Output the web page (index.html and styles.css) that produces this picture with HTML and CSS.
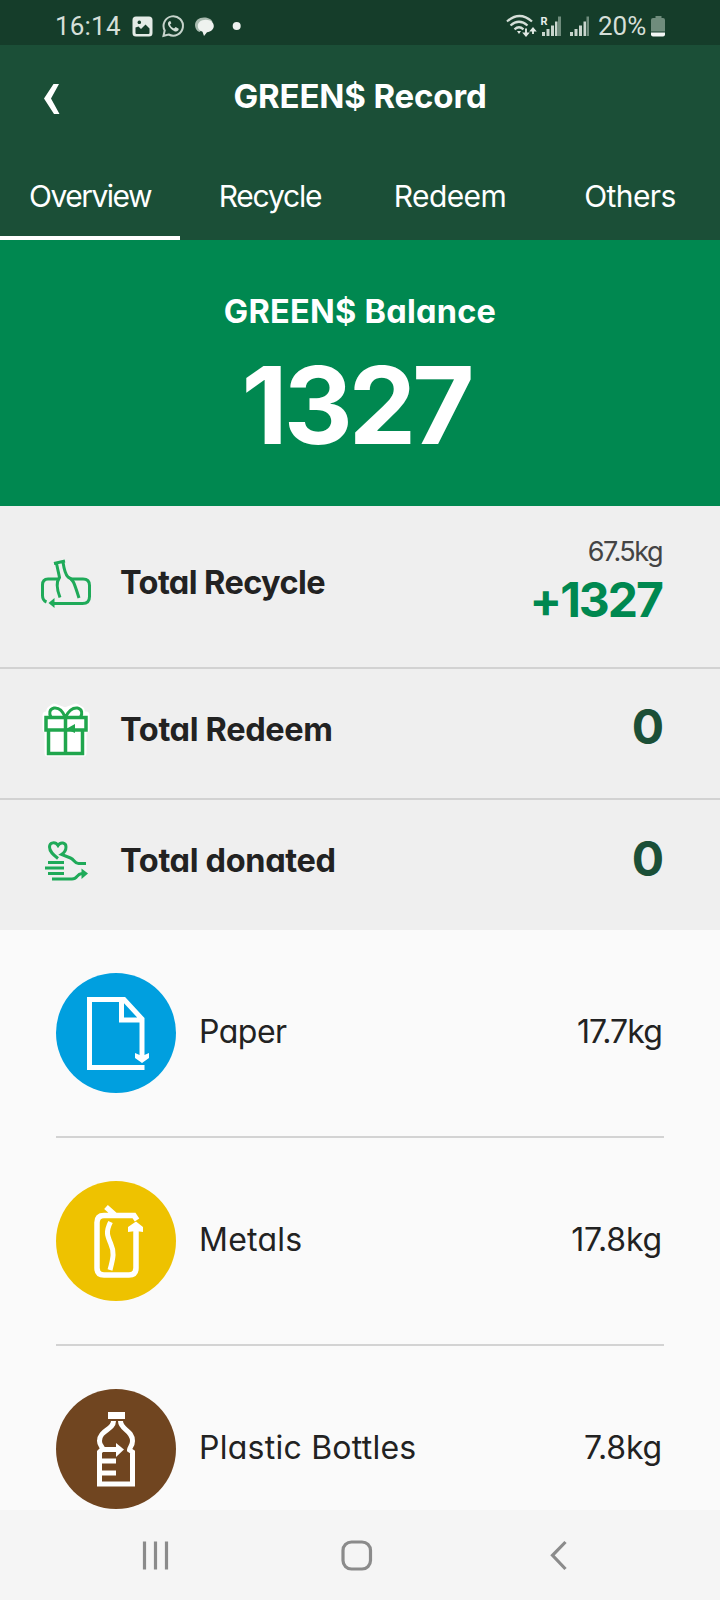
FILE: index.html
```html
<!DOCTYPE html>
<html lang="en">
<head>
<meta charset="utf-8">
<title>GREEN$ Record</title>
<link rel="stylesheet" href="styles.css">
</head>
<body>
<div class="status">
  <span class="clock">16:14</span>
  <svg class="status-left" width="116" height="26" viewBox="130 13 116 26">
    <path fill="#e4ebe6" fill-rule="evenodd" d="M136 16.5h13q3.500 0 3.500 3.500v13q0 3.500-3.500 3.500h-13q-3.500 0-3.500-3.500V20q0-3.500 3.500-3.500zM135.500 27.500v5.500q0 1 1 1h12q1 0 1-1v-4.500l-4-4-4.500 4.500-2.500-2.500zM139.300 20.500a1.800 1.800 0 1 0 .01 0z"/>
    <path d="M163.500 35.800l1.200-5.300a9.700 9.700 0 1 1 4 4z" fill="none" stroke="#c6d3cb" stroke-width="2"/>
    <path d="M169.300 21.300c-2.600 1.500-1 5 1.800 7.600s6 3.600 7.400 1.200l.2-1.400-3-1.700-1.700 1.600c-2-.7-3.400-2.200-4-4l1.400-1.400-1.100-2.300z" fill="#d2ddd6"/>
    <path d="M195 25c0-4.500 3.800-7.500 9-7.500 4 0 7.500 1.500 8.500 4.500l-13 10c-3-1-4.500-4-4.500-7z" fill="#a9bbb0"/>
    <path d="M205.800 19.800c4.800 0 8 2.800 8 6.300 0 3.400-3 5.700-6.800 6.200l-3 3.700-1.500-4.200c-3-.9-4.700-3-4.700-5.700 0-3.500 3.200-6.300 8-6.300z" fill="#eef2ef"/>
    <circle cx="236.700" cy="26" r="4" fill="#eef2ef"/>
  </svg>
  <svg class="status-right" width="90" height="26" viewBox="505 13 90 26">
    <g fill="none" stroke="#d5dfd8" stroke-width="2.300">
      <path d="M507 21.500q12.500-11 25 0M510.500 25.500q8.500-7.500 17 0M514.500 29.300q4.500-4 9 0"/>
      <path d="M526 28.500v5M533 34v-4.500" stroke-width="2"/>
    </g>
    <path d="M517 31h4l-2 3zM522.200 32.500h7.600l-3.800 4.500zM529.200 31.500h7.600l-3.800-4.500z" fill="#e2e9e4"/>
    <g fill="#c9d5cd"><path d="M542 32h3v4h-3zM546.500 29h3v7h-3zM551 25.500h3v10.500h-3zM555 21.500h2.500v14.500H555zM570 32h3v4h-3zM574.500 29h3v7h-3zM579 25.500h3v10.500h-3zM583.500 21.500h2.500v14.500h-2.500z"/></g>
    <path d="M558 16.500h3v19.500h-3zM586.500 16.500h2.500v19.500h-2.500z" fill="#6f8c7c"/>
    <text x="540.500" y="25" class="roam">R</text>
  </svg>
  <span class="percent">20%</span>
  <svg width="16" height="22" viewBox="650 15 16 22"><path d="M655.500 16h6v2h1.500q2 0 2 2v11.500h-14V20q0-2 2-2h2.500z" fill="#6f8c7c"/><path d="M651 32.500h14v2q0 2-2 2h-10q-2 0-2-2z" fill="#f4f7f5"/></svg>
</div>
<header class="header">
  <div class="titlebar">
    <svg class="back" width="18" height="34" viewBox="44 81 18 34"><path d="M54.500 83h5.500l-8 14.500 8.500 15.500h-5.500L45 97.500z" fill="#fff"/></svg>
    <h1 class="title">GREEN$ Record</h1>
  </div>
  <nav class="tabs">
    <span class="tab active">Overview</span>
    <span class="tab tab-tight">Recycle</span>
    <span class="tab">Redeem</span>
    <span class="tab">Others</span>
  </nav>
</header>
<section class="hero">
  <div class="hero-label">GREEN$ Balance</div>
  <div class="hero-value">1327</div>
</section>
<section class="totals">
  <div class="total total-recycle">
    <svg class="total-icon" width="54" height="54" viewBox="38 555.500 54 54" fill="none" stroke="#1faa59" stroke-width="3">
      <path d="M54 564l11-2.500M56.500 564l3 14c-3 4-3.500 10 .5 20M63 562.500c1 7 2 12 5 15 5 2 6 5 11 21"/>
      <path d="M58 579.500H48q-5.500 0-5.500 6V596q0 5 4 6.500M70 579.500h13q6.500 0 6.500 6.500v11q0 7-7 7H52"/>
      <path d="M48.500 603.500l6-5v10z" fill="#1faa59" stroke="none"/>
    </svg>
    <span class="total-name name-recycle">Total Recycle</span>
    <div class="total-values">
      <span class="weight">67.5kg</span>
      <span class="points gain">+1327</span>
    </div>
  </div>
  <div class="total">
    <svg class="total-icon" width="54" height="60" viewBox="38 700 54 60" fill="none" stroke="#20a64d" stroke-width="3.500">
      <path d="M46 716h3l1-5 4-3 11 4 11-4 5 3 1 5h4v14h-3v24H48v-24h-2z" fill="#fff" stroke="#fff" stroke-width="7" stroke-linejoin="round"/>
      <path d="M46 718.500h40V731H46zM48.500 731v23.500h34V731M65.500 718v36.500"/>
      <path d="M65 718c-3-8-7-9.500-11-9-5 1-5 6-3 9M65.500 718c4-8 8-9.500 12-9 5 1 5 6 3 9" stroke-width="3"/>
      <path d="M66 730l9-5v9z" fill="#20a64d" stroke="none"/>
    </svg>
    <span class="total-name">Total Redeem</span>
    <span class="points points-redeem">0</span>
  </div>
  <div class="total total-donated">
    <svg class="total-icon" width="54" height="54" viewBox="38 833 54 54" fill="none" stroke="#1faa59" stroke-width="3">
      <path d="M58 859.500c-5-4-8.500-7-8.500-11.500 0-5 6-5.500 8.500-1.500 2.500-4 8-3 8 1.500 0 3-1.500 5.500-4.500 7.500l9 3.500c4 1.500 4 5.500 8 5.500h7.500"/>
      <path d="M48 863.500h16M45 869h19M48 874.500h16M52 880h20c6 0 4-5 10-5.500"/>
      <path d="M81.500 869.500l6.500 5-6.500 5.500z" fill="#1faa59" stroke="none"/>
    </svg>
    <span class="total-name">Total donated</span>
    <span class="points">0</span>
  </div>
</section>
<main class="materials">
  <div class="material">
    <svg class="badge paper" width="120" height="120" viewBox="0 0 120 120" fill="none" stroke="#fff" stroke-width="5">
      <path d="M88.500 94.500h-55v-68H68L86 46v39M65.500 26.500V47H86"/>
      <path d="M79 80l7 3 7-3v5l-7 5-7-5z" fill="#fff" stroke="none"/>
    </svg>
    <span class="material-name name-tight">Paper</span>
    <span class="material-weight weight-tight">17.7kg</span>
  </div>
  <div class="material">
    <svg class="badge metals" width="120" height="120" viewBox="0 0 120 120" fill="none" stroke="#fff" stroke-width="5.500">
      <path d="M50 26l9 8M81 39l-3-4.500H48q-7 0-7 7V87q0 7 7 7h25q7 0 7-7V47"/>
      <path d="M54.500 41c-5 10-3 14 0 21 4 9 3 14-.5 27" stroke-width="5"/>
      <path d="M72 51v-5l8-5.500 7 5.500v5l-7-1z" fill="#fff" stroke="none"/>
    </svg>
    <span class="material-name">Metals</span>
    <span class="material-weight">17.8kg</span>
  </div>
  <div class="material">
    <svg class="badge plastic" width="120" height="120" viewBox="0 0 120 120" fill="none" stroke="#fff" stroke-width="5">
      <path d="M52 26.500h17" stroke-width="7"/>
      <path d="M57.500 32c0 9-14 9-14 20 0 5 3 5 3 8l-3 3v32h33V63l-3-2c0-3 3-4 3-9 0-11-12-11-12-20M45 60.500h18M44 72h16M44 84h16"/>
      <path d="M60 54l8 6.500-8 7.500z" fill="#fff" stroke="none"/>
    </svg>
    <span class="material-name">Plastic Bottles</span>
    <span class="material-weight">7.8kg</span>
  </div>
</main>
<footer class="navbar">
  <svg width="720" height="90" viewBox="0 0 720 90" fill="none" stroke="#8b8b8b" stroke-width="3.200">
    <path d="M144.500 31.500v28M155.500 31.500v28M166.500 31.500v28"/>
    <rect x="343" y="32" width="27.500" height="27" rx="8.500"/>
    <path d="M565.500 32L552.500 45.300l13 13.700"/>
  </svg>
</footer>
</body>
</html>
```
FILE: styles.css
```css
* { box-sizing: border-box; }
body {
  margin: 0;
  width: 720px;
  height: 1600px;
  overflow: hidden;
  display: flex;
  flex-direction: column;
  background: #fafafa;
  color: #222;
  font-family: Inter, "Liberation Sans", sans-serif;
  font-feature-settings: "cv11";
  white-space: nowrap;
}
svg { display: block; flex: none; }
.status {
  height: 45px;
  flex: none;
  display: flex;
  align-items: center;
  padding: 7px 54px 0 55px;
  background: #153d2a;
  color: #d5dfd8;
  font: 26px/38px Roboto, sans-serif;
}
.clock { width: 75px; letter-spacing: 0.2px; }
.status-right { margin-left: auto; }
.percent { width: 55px; padding-left: 3px; letter-spacing: 0; }
.roam { font: bold 11px Roboto, sans-serif; fill: #e8eeea; }
.header {
  height: 195px;
  flex: none;
  background: #1b4f37;
  color: #fff;
}
.titlebar {
  height: 105px;
  display: grid;
  grid-template-columns: 100px 1fr 100px;
  align-items: center;
}
.back { margin: 2px 0 0 43px; }
.title {
  margin: 0 0 4px;
  text-align: center;
  font-size: 33px;
  line-height: 40px;
  font-weight: 700;
  letter-spacing: -0.15px;
}
.tabs { display: grid; grid-template-columns: repeat(4, 1fr); height: 90px; }
.tab {
  padding-top: 26px;
  text-align: center;
  font-size: 30px;
  line-height: 40px;
  letter-spacing: -0.6px;
}
.active { border-bottom: 4px solid #fff; letter-spacing: -1.5px; }
.tab-tight { letter-spacing: -1.2px; }
.hero {
  height: 266px;
  flex: none;
  padding-top: 52px;
  background: #008850;
  color: #fff;
  text-align: center;
  font-weight: 700;
}
.hero-label { font-size: 32.500px; line-height: 40px; letter-spacing: 0.25px; }
.hero-value { margin-top: 13px; padding-right: 8px; font-size: 107px; line-height: 120px; letter-spacing: -4px; }
.totals { height: 424px; flex: none; background: #efefef; }
.total {
  height: 131px;
  display: flex;
  align-items: center;
  padding: 0 58px 10px 38px;
  border-bottom: 2px solid #d2d2d2;
}
.total-recycle { height: 163px; }
.total-donated { height: 130px; border: 0; padding-bottom: 12px; }
.total-name { margin: 2px 0 0 28px; font-size: 32.500px; font-weight: 700; letter-spacing: -0.35px; }
.name-recycle { letter-spacing: -0.6px; }
.total-values { display: flex; flex-direction: column; align-items: flex-end; margin: 0 0 7px auto; }
.weight { font-size: 27px; line-height: 44px; letter-spacing: -1.5px; color: #444; }
.points { margin-left: auto; font-size: 48px; line-height: 52px; font-weight: 700; color: #1b4f37; letter-spacing: -2px; }
.points-redeem { padding-bottom: 3px; }
.gain { color: #008850; }
.materials { height: 580px; flex: none; padding: 0 56px; }
.material {
  height: 208px;
  display: flex;
  align-items: center;
  border-bottom: 2px solid #d3d3d3;
}
.material:last-child { height: 206px; border: 0; }
.badge { border-radius: 50%; }
.paper { background: #009fdf; }
.metals { background: #eec200; }
.plastic { background: #704520; }
.material-name { margin-left: 23px; font-size: 32px; line-height: 40px; padding-bottom: 2px; letter-spacing: 0.25px; }
.name-tight { letter-spacing: -0.5px; }
.material-weight { margin-left: auto; padding-right: 2px; font-size: 32px; line-height: 40px; padding-bottom: 2px; letter-spacing: -0.2px; }
.weight-tight { letter-spacing: -0.9px; }
.navbar { height: 90px; flex: none; background: #f5f5f5; }
```
